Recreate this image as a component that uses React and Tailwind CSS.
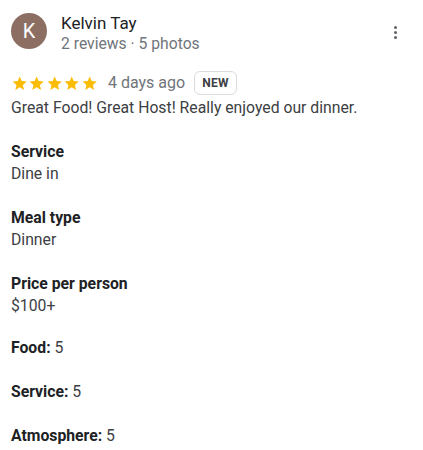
import React from 'react';

function Star() {
  return (
    <svg width="17.4" height="17" viewBox="0 0 24 24" className="block">
      <path fill="#fbbc04" d="M12 17.27 18.18 21l-1.64-7.03L22 9.24l-7.19-.61L12 2 9.19 8.63 2 9.24l5.46 4.73L5.82 21z" />
    </svg>
  );
}

const details = [
  { label: 'Service', value: 'Dine in' },
  { label: 'Meal type', value: 'Dinner' },
  { label: 'Price per person', value: '$100+' },
];

const ratings = [
  { label: 'Food', value: 5 },
  { label: 'Service', value: 5 },
  { label: 'Atmosphere', value: 5 },
];

export default function App() {
  return (
    <div className="bg-white w-[423px] min-h-[450px] pl-[11px] pr-4 pt-[13px] font-['Roboto',sans-serif] text-[#202124]">
      <div className="flex items-start">
        <div className="w-9 h-9 rounded-full bg-[#8d6e63] flex items-center justify-center text-white text-[20px] shrink-0">
          K
        </div>
        <div className="ml-[14px] flex-1">
          <div className="text-[17px] leading-[20px]">Kelvin Tay</div>
          <div className="text-[15.7px] leading-[21px] text-[#70757a]">2 reviews · 5 photos</div>
        </div>
        <button className="mt-[13px] mr-[2px] flex flex-col gap-[2px] px-[8px]">
          <span className="w-[3px] h-[3px] rounded-full bg-[#5f6368]" />
          <span className="w-[3px] h-[3px] rounded-full bg-[#5f6368]" />
          <span className="w-[3px] h-[3px] rounded-full bg-[#5f6368]" />
        </button>
      </div>

      <div className="flex items-center mt-[17px]">
        <div className="flex">
          <Star /><Star /><Star /><Star /><Star />
        </div>
        <span className="ml-[10px] text-[16px] text-[#70757a]">4 days ago</span>
        <span className="ml-[9px] h-6 px-[7px] border border-[#dadce0] rounded-md flex items-center text-[12px] font-bold tracking-wide text-[#3c4043]">
          NEW
        </span>
      </div>

      <p className="mt-[2px] text-[15.75px] leading-[22px] text-[#3c4043]">
        Great Food! Great Host! Really enjoyed our dinner.
      </p>

      <div className="text-[15.75px] leading-[22px] text-[#3c4043]">
        {details.map((d) => (
          <div key={d.label} className="mt-[22px]">
            <div className="font-bold text-[#202124]">{d.label}</div>
            <div>{d.value}</div>
          </div>
        ))}
        {ratings.map((r, i) => (
          <div key={r.label} className={i === 0 ? 'mt-[20px]' : 'mt-[22px]'}>
            <span className="font-bold text-[#202124]">{r.label}:</span> {r.value}
          </div>
        ))}
      </div>
    </div>
  );
}
